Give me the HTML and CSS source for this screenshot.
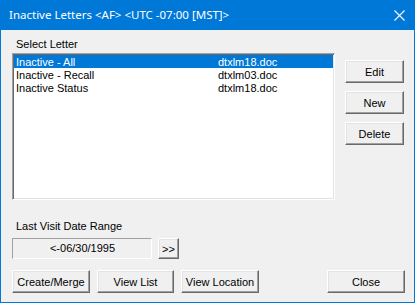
FILE: index.html
```html
<!DOCTYPE html>
<html>
<head>
<meta charset="utf-8">
<link rel="stylesheet" href="styles.css">
</head>
<body>
<div class="window">
  <div class="titlebar">
    <span class="title">Inactive Letters &lt;AF&gt; &lt;UTC -07:00 [MST]&gt;</span>
    <svg class="close-x" width="11" height="11" viewBox="0 0 11 11"><path d="M0.5 0.5 L10.5 10.5 M10.5 0.5 L0.5 10.5" stroke="#fff" stroke-width="1.1" fill="none"/></svg>
  </div>
  <div class="content">
    <div class="top">
      <div class="leftcol">
        <div class="label">Select Letter</div>
        <div class="listbox">
          <div class="row selected"><span class="c1">Inactive - All</span><span class="c2">dtxlm18.doc</span></div>
          <div class="row"><span class="c1">Inactive - Recall</span><span class="c2">dtxlm03.doc</span></div>
          <div class="row"><span class="c1">Inactive Status</span><span class="c2">dtxlm18.doc</span></div>
        </div>
      </div>
      <div class="rightcol">
        <button class="btn side">Edit</button>
        <button class="btn side">New</button>
        <button class="btn side">Delete</button>
      </div>
    </div>
    <div class="label label2">Last Visit Date Range</div>
    <div class="daterow">
      <div class="datebox">&lt;-06/30/1995</div>
      <button class="btn small">&gt;&gt;</button>
    </div>
    <div class="bottom">
      <button class="btn b1">Create/Merge</button>
      <button class="btn b2">View List</button>
      <button class="btn b3">View Location</button>
      <div class="spacer"></div>
      <button class="btn b4">Close</button>
    </div>
  </div>
</div>
</body>
</html>
```
FILE: styles.css
```css
* { box-sizing: border-box; }
html, body { margin: 0; padding: 0; background: #f0f0f0; }
body { font-family: "Liberation Sans", Arial, sans-serif; font-size: 11px; color: #000; }
.window {
  width: 415px; height: 303px;
  border: 1px solid #0078d7; border-top: none;
  background: #f0f0f0;
  display: flex; flex-direction: column;
}
.titlebar {
  height: 30px; background: #0078d7; color: #fff;
  display: flex; align-items: center; justify-content: space-between;
  padding: 0 10px 0 9px; margin: 0 -1px;
  font-family: "Noto Sans", "Open Sans", sans-serif; font-size: 11.5px;
}
.title { position: relative; top: -1px; }
.close-x { position: relative; top: 0; }
.content { padding: 8px 9px 0 11px; display: flex; flex-direction: column; }
.top { display: flex; }
.leftcol { width: 323px; }
.label { height: 13px; line-height: 13px; padding-left: 4px; margin-bottom: 2px; }
.listbox {
  height: 147px; background: #fff;
  border: 1px solid; border-color: #a0a0a0 #fff #fff #a0a0a0;
  box-shadow: inset 1px 1px 0 #696969, inset -1px -1px 0 #e3e3e3;
  padding: 1px;
}
.row { height: 13px; line-height: 14px; display: flex; padding-left: 2px; }
.row.selected { background: #0078d7; color: #fff; }
.c1 { width: 202px; }
.rightcol { display: flex; flex-direction: column; margin-left: 10px; padding-top: 22px; gap: 8px; }
.btn {
  font-family: "Liberation Sans", Arial, sans-serif; font-size: 11px; color: #000;
  background: #f0f0f0; padding: 0; margin: 0;
  border: 1px solid; border-color: #fff #696969 #696969 #fff;
  box-shadow: inset -1px -1px 0 #a0a0a0, inset 1px 1px 0 #e3e3e3;
  height: 23px;
}
.btn.side { width: 59px; }
.label2 { margin-top: 20px; margin-bottom: 5px; }
.daterow { display: flex; align-items: center; gap: 6px; height: 21px; }
.datebox {
  width: 140px; height: 21px; line-height: 19px; text-align: center;
  border: 1px solid; border-color: #a0a0a0 #fff #fff #a0a0a0;
  padding-left: 1px;
}
.btn.small { width: 21px; height: 21px; font-size: 11px; }
.bottom { display: flex; margin-top: 11px; gap: 7px; }
.btn.b1 { width: 78px; }
.btn.b2 { width: 77px; }
.btn.b3 { width: 78px; }
.spacer { flex: 1; }
.btn.b4 { width: 78px; }
```
